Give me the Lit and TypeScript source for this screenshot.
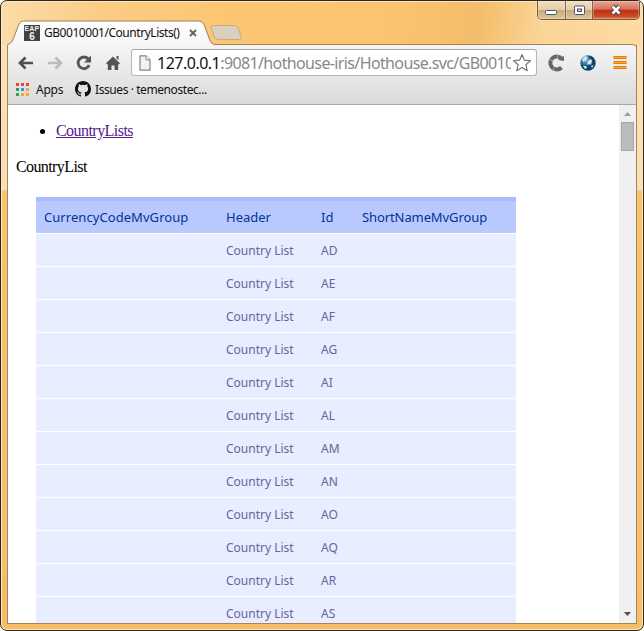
import { LitElement, html, css } from "lit";
import { customElement } from "lit/decorators.js";

const codes = ["AD", "AE", "AF", "AG", "AI", "AL", "AM", "AN", "AO", "AQ", "AR", "AS"];

@customElement("browser-titlebar")
class BrowserTitlebar extends LitElement {
  static styles = css`
    :host { display: block; position: relative; height: 44px; font: 12px "Noto Sans", "Open Sans", sans-serif; }
    .shape { position: absolute; left: -1px; top: 0; display: block; }
    .tab { position: relative; display: flex; align-items: center; height: 20px; padding: 22px 0 0 23px; width: 175px; }
    .fav { flex: none; width: 16px; height: 16px; background: #414141; color: #f4f4f4; display: flex; flex-direction: column; align-items: center; font-family: "Liberation Sans", sans-serif; font-weight: bold; }
    .fav .top { font-size: 7px; line-height: 7px; letter-spacing: .2px; }
    .fav .num { font-size: 10px; line-height: 9px; }
    .title { margin-left: 4px; width: 137px; line-height: 18px; white-space: nowrap; color: #111; letter-spacing: -0.46px; }
    .x { flex: none; margin-left: 8px; }
    .controls { position: absolute; right: 3px; top: 0; display: flex; height: 18px; border: 1px solid #74573a; border-top: 0; border-radius: 0 0 5px 5px; overflow: hidden; box-shadow: 0 0 0 1px #ffe7bd88; }
    .btn { box-sizing: border-box; display: flex; align-items: center; justify-content: center; width: 27px; border-right: 1px solid #826443; background: linear-gradient(#f0dfc2, #e2cda9 48%, #c5aa7c 50%, #dec59b); box-shadow: inset 0 0 0 1px #fff4; }
    .btn:first-child { width: 28px; }
    .btn svg { margin-top: 0; }
    .btn .min { margin-top: 4px; }
    .close { width: 46px; border: 0; background: linear-gradient(#e9a592, #d8705a 46%, #bd2f13 50%, #cf4a25 85%, #e07a50); }
  `;
  render() {
    return html`
      <svg class="shape" width="644" height="46" viewBox="0 0 644 46">
        <defs>
          <linearGradient id="t" x1="0" y1="0" x2="0" y2="1"><stop offset="0" stop-color="#fff"/><stop offset="1" stop-color="#f5f5f5"/></linearGradient>
        </defs>
        <path d="M213 24.500h21q3 0 4 2l3.500 10q.5 2-2 2h-20q-4 0-5-2l-3.500-10q0-2 2-2z" fill="#dacfbf" stroke="#c4aa80"/>
        <path d="M7.500 46v-1.500q0-1.500 2.500-2 2-1 3-4l6-15.500q1.300-3 4.500-3H199q3.500 0 5 3.500l6 16q1.500 4 5 4H632q4 0 4.500 2.500" fill="url(#t)" stroke="#9d8054"/>
      </svg>
      <div class="tab">
        <div class="fav"><span class="top">EAP</span><span class="num">6</span></div>
        <span class="title">GB0010001/CountryLists()</span>
        <svg class="x" width="8" height="8" viewBox="0 0 8 8"><path d="M1 1l6 6M7 1l-6 6" stroke="#606060" stroke-width="1.800"/></svg>
      </div>
      <div class="controls">
        <div class="btn"><svg class="min" width="13" height="7"><rect x=".5" y="1.500" width="11" height="4" rx="1" fill="#fff" stroke="#4d5068"/></svg></div>
        <div class="btn"><svg width="13" height="11"><rect x="1.500" y="1" width="10" height="8.500" rx="1" fill="#fff" stroke="#4d5068"/><rect x="4.500" y="4" width="4" height="2.500" fill="#dcc8a6" stroke="#4d5068"/></svg></div>
        <div class="btn close"><svg width="14" height="12" viewBox="0 0 14 12"><path d="M3.500 2l7 8M10.500 2l-7 8" stroke="#514452" stroke-width="4.500"/><path d="M3.500 2.500l7 7M10.500 2.500l-7 7" stroke="#fff" stroke-width="2.500"/></svg></div>
      </div>`;
  }
}

@customElement("browser-toolbar")
class BrowserToolbar extends LitElement {
  static styles = css`
    :host { display: block; height: 60px; box-sizing: border-box; background: linear-gradient(#f5f5f5, #dadada); border-bottom: 1px solid #a6a6a6; font-family: "Noto Sans", "Open Sans", sans-serif; }
    svg { display: block; flex: none; }
    .nav { display: flex; align-items: center; height: 27px; padding: 4px 8px 0 9px; }
    .buttons { display: flex; flex: none; gap: 11px; width: 114px; align-items: center; }
    .omni { box-sizing: border-box; flex: none; width: 406px; height: 27px; display: flex; align-items: center; border: 1px solid #b5b5b5; border-top-color: #a5a5a5; border-radius: 3px; background: #fff; padding: 0 3px 0 7px; }
    .url { margin-left: 6px; width: 354px; overflow: hidden; white-space: nowrap; font-size: 16px; line-height: 24px; color: #888; letter-spacing: -0.63px; }
    .host { color: #111; letter-spacing: -.5px; }
    .star { margin-left: 1px; }
    .actions { display: flex; align-items: center; gap: 14px; margin-left: 10px; }
    .marks { display: flex; align-items: center; height: 26px; padding-left: 8px; font-size: 12px; color: #111; }
    .apps { display: grid; grid-template-columns: repeat(3, 3px); gap: 2px; grid-auto-rows: 3px; }
    .d0 { background: #ee4035; } .d1 { background: #25a15a; } .d2 { background: #3f8ef0; } .d3 { background: #f8a820; }
    .label { margin-left: 7px; width: 27px; letter-spacing: -.25px; }
    .git { margin-left: 12px; }
    .issues { margin-left: 4px; white-space: nowrap; letter-spacing: -.42px; }
  `;
  render() {
    return html`
      <div class="nav">
        <div class="buttons">
          <svg width="18" height="18" viewBox="0 0 18 18"><path d="M16 9H3M8.500 3.500L3 9l5.500 5.500" fill="none" stroke="#505050" stroke-width="2.700"/></svg>
          <svg width="18" height="18" viewBox="0 0 18 18"><path d="M2 9h13M9.500 3.500L15 9l-5.500 5.500" fill="none" stroke="#bcbcbc" stroke-width="2.700"/></svg>
          <svg width="18" height="18" viewBox="0 0 18 18"><path d="M14.200 11.200A5.800 5.800 0 1 1 13.300 5" fill="none" stroke="#555" stroke-width="2.800"/><path d="M16 1.500v7H9z" fill="#555"/></svg>
          <svg width="18" height="18" viewBox="0 0 18 18"><path d="M9 2.500l7 6.800-1.100 1.200-.7-.6V16H10.500v-4.500H7.500V16H3.800V9.900l-.7.6L2 9.300zM12.500 2h2v4.200l-2-2z" fill="#555"/></svg>
        </div>
        <div class="omni">
          <svg width="12" height="16" viewBox="0 0 12 16"><path d="M1 .8h6l4 4v10.400H1z" fill="#f2f2f2" stroke="#858585" stroke-width="1.200"/><path d="M7 .8v4h4" fill="#fff" stroke="#858585"/></svg>
          <div class="url"><span class="host">127.0.0.1</span>:9081/hothouse-iris/Hothouse.svc/GB0010</div>
          <svg class="star" width="20" height="19" viewBox="0 0 20 19"><path d="M10 1.500l2.400 5.700 6 .5-4.500 4 1.300 6L10 14.500l-5.200 3.200 1.300-6-4.500-4 6-.5z" fill="#fff" stroke="#777" stroke-width="1.200" stroke-linejoin="round"/></svg>
        </div>
        <div class="actions">
          <svg width="18" height="18" viewBox="0 0 18 18"><path d="M14.500 4.500A6.500 6.500 0 1 0 14.500 13.500" fill="none" stroke="#686868" stroke-width="4"/><path d="M11 6l6-4v5z" fill="#686868"/><path d="M2 5l4 2M7 14l-1 3M11 1l-1 3" stroke="#aaa"/></svg>
          <svg width="18" height="18" viewBox="0 0 18 18"><defs><radialGradient id="g" cx=".35" cy=".3"><stop stop-color="#a5c8da"/><stop offset=".45" stop-color="#3987b1"/><stop offset="1" stop-color="#0c4269"/></radialGradient></defs><circle cx="9" cy="9" r="7.700" fill="url(#g)"/><path d="M3 5l3-3 3 1-2 3-3 2zM9 7l3-2 1 2-1 4-2-1-2 1zM4 12l3 0 1 2-2 1zM12 12l3-1-2 3z" fill="#d5e5ed"/><path d="M9 2l4 1 2 3-3-1z" fill="#143e5c"/></svg>
          <svg width="18" height="18" viewBox="0 0 18 18"><path d="M2.500 3.500h13M2.500 8.500h13M2.500 13.500h13" stroke="#e77e08" stroke-width="3"/><path d="M2.500 3.500h13M2.500 8.500h13M2.500 13.500h13" stroke="#ffa52a" stroke-width="1"/></svg>
        </div>
      </div>
      <div class="marks">
        <div class="apps">${[0, 0, 0, 1, 2, 3, 1, 3, 3].map(n => html`<i class="d${n}"></i>`)}</div>
        <span class="label">Apps</span>
        <svg class="git" width="16" height="16" viewBox="0 0 16 16"><path fill="#111" d="M8 0C3.580 0 0 3.580 0 8c0 3.540 2.290 6.530 5.470 7.590.4.070.55-.17.55-.38v-1.490c-2.010.37-2.530-.49-2.690-.94-.09-.23-.48-.94-.82-1.130-.28-.15-.68-.52-.01-.53.63-.01 1.080.58 1.230.82.72 1.210 1.870.87 2.330.66.07-.52.28-.87.51-1.070-1.780-.2-3.640-.89-3.640-3.950 0-.87.31-1.590.82-2.150-.08-.2-.36-1.020.08-2.120 0 0 .67-.21 2.200.82a7.600 7.600 0 0 1 4 0c1.530-1.040 2.200-.82 2.200-.82.44 1.100.16 1.920.08 2.120.51.56.82 1.270.82 2.150 0 3.070-1.870 3.750-3.650 3.950.29.25.54.73.54 1.480v2.200c0 .21.15.46.55.38A8 8 0 0 0 16 8c0-4.420-3.580-8-8-8z"/></svg>
        <span class="issues">Issues · temenostec...</span>
      </div>`;
  }
}

@customElement("country-page")
class CountryPage extends LitElement {
  static styles = css`
    :host { display: flex; flex: 1; min-height: 0; overflow: hidden; background: #fff; font: 16px/18px "Liberation Serif", serif; color: #000; }
    .doc { flex: 1; padding: 0 8px; min-width: 0; }
    ul { margin: 17px 0 18px; padding-left: 40px; }
    a { color: #551a8b; text-decoration: underline; letter-spacing: -.55px; }
    .name { margin: 0; letter-spacing: -.6px; }
    table { margin: 21px 0 0 20px; width: 480px; table-layout: fixed; border-collapse: collapse; font-family: "Noto Sans", "Open Sans", sans-serif; text-align: left; white-space: nowrap; }
    .c1 { width: 182px; } .c2 { width: 95px; } .c3 { width: 41px; } .c4 { width: 162px; }
    thead { background: #b9c9fe; color: #039; font-size: 13px; }
    thead tr { height: 37px; }
    th { font-weight: normal; padding: 3px 8px 1px; box-shadow: inset 0 4px #aabcfe, inset 0 -1px #fff; }
    th:first-child { letter-spacing: .06px; }
    th:last-child { letter-spacing: -.1px; }
    tbody { background: #e8edff; color: #669; font-size: 12px; }
    tbody tr { height: 33px; }
    td { padding: 0 8px; box-shadow: inset 0 -1px #fff; }
    .bar { width: 17px; background: #f0f0f0; display: flex; flex-direction: column; align-items: center; }
    .thumb { box-sizing: border-box; width: 13px; height: 29px; background: #bcbcbc; border: 1px solid #a6a6a6; }
    .gap { flex: 1; }
    svg { display: block; }
  `;
  render() {
    return html`
      <div class="doc">
        <ul><li><a>CountryLists</a></li></ul>
        <p class="name">CountryList</p>
        <table>
          <colgroup><col class="c1"><col class="c2"><col class="c3"><col class="c4"></colgroup>
          <thead><tr><th>CurrencyCodeMvGroup</th><th>Header</th><th>Id</th><th>ShortNameMvGroup</th></tr></thead>
          <tbody>${codes.map(c => html`<tr><td></td><td>Country List</td><td>${c}</td><td></td></tr>`)}</tbody>
        </table>
      </div>
      <div class="bar">
        <svg width="17" height="17"><path d="M5 11h7L8.500 7z" fill="#a0a0a0"/></svg>
        <div class="thumb"></div>
        <div class="gap"></div>
        <svg width="17" height="17"><path d="M5 6h7l-3.500 4z" fill="#505050"/></svg>
      </div>`;
  }
}

@customElement("app-root")
class AppRoot extends LitElement {
  static styles = css`
    :host { display: block; width: 644px; height: 631px; background: #fff; overflow: hidden; }
    .window { box-sizing: border-box; width: 644px; height: 631px; border: 1px solid #30251a; border-radius: 7px; overflow: hidden;
      background: linear-gradient(100deg, #fbdcaa 0, #fbcc84 16%, #fdc673 35%, #fcc470 60%, #f3bd6b 74%, #fbd597 84%, #fddba4 100%) 0 0 / 100% 44px no-repeat, linear-gradient(#fce0b2 0, #fbdfb4 189px, #fbc26c 190px, #f9bd68 100%);
      box-shadow: inset 0 0 0 1px #ffe9c4; display: flex; flex-direction: column; }
    .body { flex: 1; min-height: 0; display: flex; flex-direction: column; margin: 0 6px 6px; border: 1px solid #a1875f; border-top: 0; }
  `;
  render() {
    return html`<div class="window">
      <browser-titlebar></browser-titlebar>
      <div class="body"><browser-toolbar></browser-toolbar><country-page></country-page></div>
    </div>`;
  }
}
